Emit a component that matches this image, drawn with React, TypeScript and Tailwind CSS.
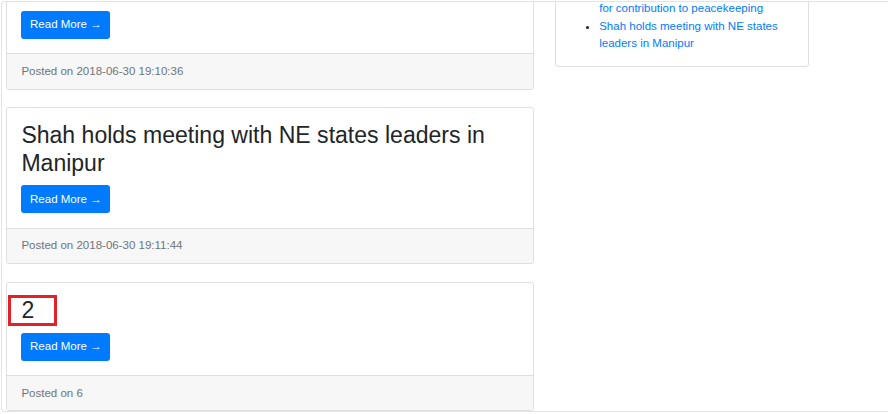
import React from 'react';

type Post = {
  title?: string;
  posted: string;
  marked?: boolean;
};

const posts: Post[] = [
  { posted: '2018-06-30 19:10:36' },
  { title: 'Shah holds meeting with NE states leaders in Manipur', posted: '2018-06-30 19:11:44' },
  { title: '2', posted: '6', marked: true },
];

const PostCard: React.FC<{ post: Post; first: boolean }> = ({ post, first }) => (
  <div
    className={`relative bg-white border border-[#dfdfdf] rounded-[3px] ${first ? '-mt-[6.7px]' : 'mt-[17.28px]'}`}
  >
    <div className="p-[14.4px]">
      {post.title && (
        <h2 className="text-[23.04px] leading-[27.65px] text-[#212529] mb-[8px]">{post.title}</h2>
      )}
      <button className="h-[27.9px] px-[8.64px] bg-[#007bff] text-white text-[11.52px] leading-[17.28px] rounded-[3px]">
        Read More &rarr;
      </button>
    </div>
    <div className="border-t border-[#dfdfdf] bg-[#f7f7f7] px-[14.4px] py-[8.64px] text-[11.52px] leading-[17.28px] text-[#6c757d] rounded-b-[3px]">
      Posted on {post.posted}
    </div>
    {post.marked && (
      <div className="absolute left-[1px] top-[12px] w-[49px] h-[31px] border-[3px] border-[#e3212a]" />
    )}
  </div>
);

export default function App() {
  return (
    <div className="w-[888px] h-[414px] overflow-hidden bg-white font-['Liberation_Sans',Arial,sans-serif]">
      <div className="ml-[1px] mt-[1px] w-[900px] h-[411px] border-l border-t border-b border-[#e4e4e4] rounded-l-[4px] overflow-hidden">
        <div className="flex items-start pl-[4px]">
          <div className="w-[528px] shrink-0">
            {posts.map((p, i) => (
              <PostCard key={i} post={p} first={i === 0} />
            ))}
          </div>
          <div className="w-[254px] shrink-0 ml-[21px] -mt-[20px] bg-white border border-[#dfdfdf] rounded-[3px]">
            <div className="px-[14.4px] pb-[13.4px]">
              <ul className="list-disc pl-[28.8px] text-[11.52px] leading-[17.28px] text-[#212529]">
                <li>
                  <a href="#" className="text-[#007bff]">
                    Indian Army honoured by UN
                    <br />
                    for contribution to peacekeeping
                  </a>
                </li>
                <li>
                  <a href="#" className="text-[#007bff]">
                    Shah holds meeting with NE states leaders in Manipur
                  </a>
                </li>
              </ul>
            </div>
          </div>
        </div>
      </div>
    </div>
  );
}
